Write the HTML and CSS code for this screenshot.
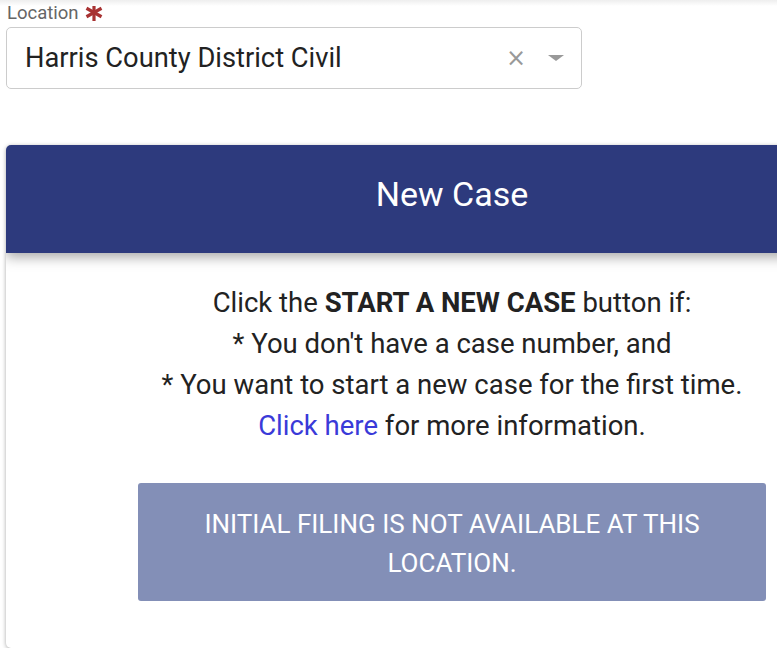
FILE: index.html
```html
<!DOCTYPE html>
<html lang="en">
<head>
<meta charset="UTF-8" />
<meta name="viewport" content="width=device-width, initial-scale=1" />
<title>New Case</title>
<link rel="stylesheet" href="styles.css">
</head>
<body>

  <div class="top-shade"></div>

  <section class="location">
    <label class="field-label" for="locationSelect">Location
      <svg class="required" width="18" height="17" viewBox="0 0 18 17">
        <g stroke="#a83232" stroke-width="3.2">
          <line x1="9" y1="0" x2="9" y2="17" />
          <line x1="1.5" y1="4.25" x2="16.5" y2="12.75" />
          <line x1="1.5" y1="12.75" x2="16.5" y2="4.25" />
        </g>
      </svg>
    </label>
    <div class="select-box" id="locationSelect">
      <span class="select-value">Harris County District Civil</span>
      <span class="select-clear">&times;</span>
      <span class="select-arrow"></span>
    </div>
  </section>

  <section class="card">
    <div class="card-header">New Case</div>
    <div class="card-body">
      <p class="info">
        Click the <strong>START A NEW CASE</strong> button if:<br>
        * You don't have a case number, and<br>
        * You want to start a new case for the first time.<br>
        <a href="#">Click here</a> for more information.
      </p>
      <button class="disabled-btn" disabled>Initial filing is not available at this location.</button>
    </div>
  </section>

</body>
</html>
```

FILE: styles.css
```css
html, body {
  overflow: hidden;
}

body {
  font-family: Roboto, 'Liberation Sans', sans-serif;
  margin: 0;
  padding: 0 0 0 6px;
  background: #fff;
  color: #222;
  width: 900px;
}

.top-shade {
  position: absolute;
  top: 0;
  left: 0;
  right: 0;
  height: 6px;
  background: linear-gradient(#eeeeee, #fff);
}

/* Поле выбора локации */
.location {
  width: 576px;
  padding-top: 2px;
}

.field-label {
  display: flex;
  align-items: center;
  gap: 6px;
  font-size: 18.5px;
  line-height: 22px;
  color: #666;
  padding-left: 1px;
  margin-bottom: 3px;
}

.required {
  margin-top: -1px;
}

.select-box {
  display: flex;
  align-items: center;
  height: 62px;
  border: 1px solid #ccc;
  border-radius: 5px;
  padding: 0 17px 0 18px;
  box-sizing: border-box;
}

.select-value {
  flex: 1;
  font-size: 27.3px;
  color: #222;
}

.select-clear {
  font-size: 24px;
  color: #999;
  margin-right: 22px;
  font-family: 'DejaVu Sans', sans-serif;
}

.select-arrow {
  width: 0;
  height: 0;
  border-left: 8px solid transparent;
  border-right: 8px solid transparent;
  border-top: 6px solid #999;
}

/* Карточка */
.card {
  width: 892px;
  margin-top: 56px;
  border-radius: 5px;
  background: #fff;
  box-shadow: 0 1px 4px rgba(0,0,0,0.35);
  overflow: hidden;
}

.card-header {
  position: relative;
  height: 108px;
  padding-bottom: 10px;
  box-sizing: border-box;
  background: #2d3a7d;
  color: #fff;
  font-size: 34px;
  display: flex;
  align-items: center;
  justify-content: center;
  box-shadow: 0 4px 12px rgba(0,0,0,0.35);
}

.card-body {
  padding: 29px 132px 47px;
  text-align: center;
}

.info {
  margin: 0 0 37px;
  font-size: 27.5px;
  line-height: 41px;
  color: #222;
}

.info strong {
  font-weight: bold;
}

.info a {
  color: #3a3ad8;
  text-decoration: none;
}

.disabled-btn {
  display: block;
  width: 100%;
  height: 118px;
  background: #838fb7;
  color: #fff;
  border: none;
  border-radius: 3px;
  font-family: Roboto, 'Liberation Sans', sans-serif;
  font-size: 26px;
  line-height: 39px;
  text-transform: uppercase;
  padding: 4px 60px 0;
}
```
